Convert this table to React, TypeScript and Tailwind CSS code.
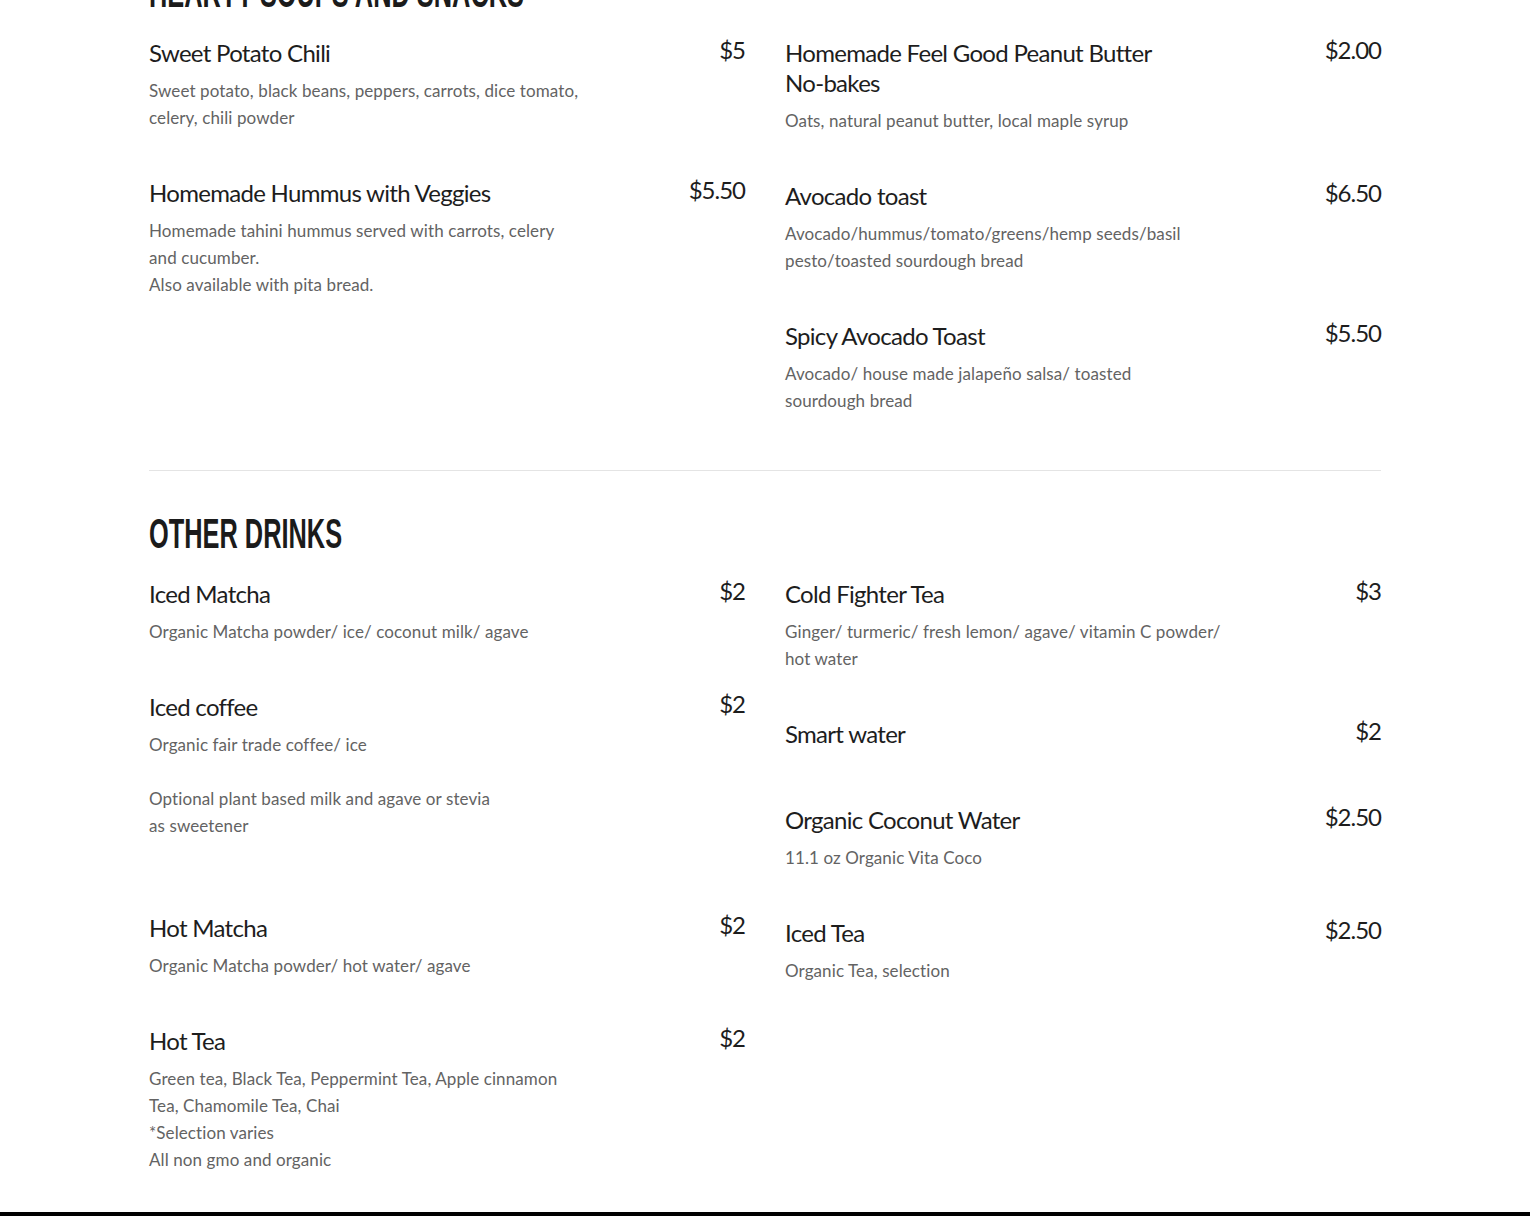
import { Fragment } from 'react'

interface MenuItem {
  name: string[]
  price: string
  desc?: string[]
  gap?: string
}

// blank string in desc = empty line
const SOUPS_LEFT: MenuItem[] = [
  {
    name: ['Sweet Potato Chili'],
    price: '$5',
    desc: ['Sweet potato, black beans, peppers, carrots, dice tomato,', 'celery, chili powder']
  },
  {
    name: ['Homemade Hummus with Veggies'],
    price: '$5.50',
    desc: [
      'Homemade tahini hummus served with carrots, celery',
      'and cucumber.',
      'Also available with pita bread.'
    ]
  }
]

const SOUPS_RIGHT: MenuItem[] = [
  {
    name: ['Homemade Feel Good Peanut Butter', 'No-bakes'],
    price: '$2.00',
    desc: ['Oats, natural peanut butter, local maple syrup']
  },
  {
    name: ['Avocado toast'],
    price: '$6.50',
    desc: ['Avocado/hummus/tomato/greens/hemp seeds/basil', 'pesto/toasted sourdough bread']
  },
  {
    name: ['Spicy Avocado Toast'],
    price: '$5.50',
    desc: ['Avocado/ house made jalapeño salsa/ toasted', 'sourdough bread']
  }
]

const DRINKS_LEFT: MenuItem[] = [
  {
    name: ['Iced Matcha'],
    price: '$2',
    desc: ['Organic Matcha powder/ ice/ coconut milk/ agave']
  },
  {
    name: ['Iced coffee'],
    price: '$2',
    desc: [
      'Organic fair trade coffee/ ice',
      '',
      'Optional plant based milk and agave or stevia',
      'as sweetener',
      ''
    ]
  },
  {
    name: ['Hot Matcha'],
    price: '$2',
    desc: ['Organic Matcha powder/ hot water/ agave']
  },
  {
    name: ['Hot Tea'],
    price: '$2',
    desc: [
      'Green tea, Black Tea, Peppermint Tea, Apple cinnamon',
      'Tea, Chamomile Tea, Chai',
      '*Selection varies',
      'All non gmo and organic'
    ]
  }
]

const DRINKS_RIGHT: MenuItem[] = [
  {
    name: ['Cold Fighter Tea'],
    price: '$3',
    desc: ['Ginger/ turmeric/ fresh lemon/ agave/ vitamin C powder/', 'hot water']
  },
  {
    name: ['Smart water'],
    price: '$2',
    gap: 'mb-[56px]'
  },
  {
    name: ['Organic Coconut Water'],
    price: '$2.50',
    desc: ['11.1 oz Organic Vita Coco']
  },
  {
    name: ['Iced Tea'],
    price: '$2.50',
    desc: ['Organic Tea, selection']
  }
]

function Item({ item, last }: { item: MenuItem; last: boolean }) {
  return (
    <div className={`flex justify-between ${last ? '' : item.gap ?? 'mb-[47px]'}`}>
      <div className="max-w-[480px]">
        <h3 className="text-[24px] leading-[30px] text-[#1d1d1d] tracking-[-0.7px]">
          {item.name.map((n, i) => (
            <Fragment key={i}>
              {i > 0 && <br />}
              {n}
            </Fragment>
          ))}
        </h3>
        {item.desc && (
          <div className="mt-[9px] text-[17px] leading-[27px] text-[#636363] tracking-[0.1px]">
            {item.desc.map((d, i) => (
              <p key={i} className="h-[27px] whitespace-nowrap">
                {d}
              </p>
            ))}
          </div>
        )}
      </div>
      <span className="-mt-[3px] text-[24px] leading-[30px] text-[#1d1d1d] tracking-[-1px]">
        {item.price}
      </span>
    </div>
  )
}

function Section({
  title,
  left,
  right,
  bottom
}: {
  title: string
  left: MenuItem[]
  right: MenuItem[]
  bottom: string
}) {
  return (
    <section className={`pt-[40px] ${bottom}`}>
      <h2
        className="mb-[24px] inline-block origin-left scale-x-[0.59] text-[43px] leading-[44px] font-bold text-[#1b1b1b] whitespace-nowrap"
        style={{ fontFamily: '"Liberation Sans Narrow", "Liberation Sans", sans-serif' }}
      >
        {title}
      </h2>
      <div className="grid grid-cols-2 gap-x-10">
        <div>
          {left.map((it, i) => (
            <Item key={i} item={it} last={i === left.length - 1} />
          ))}
        </div>
        <div>
          {right.map((it, i) => (
            <Item key={i} item={it} last={i === right.length - 1} />
          ))}
        </div>
      </div>
    </section>
  )
}

export default function App() {
  return (
    <div className="min-h-[1216px] bg-white font-['Lato',sans-serif] overflow-hidden">
      <div className="mx-auto -mt-[70px] w-[1232px]">
        <Section title="HEARTY SOUPS AND SNACKS" left={SOUPS_LEFT} right={SOUPS_RIGHT} bottom="pb-[56px]" />
        <div className="h-px bg-[#e4e4e4]" />
        <Section title="OTHER DRINKS" left={DRINKS_LEFT} right={DRINKS_RIGHT} bottom="pb-[39px]" />
      </div>
      <footer className="h-[120px] bg-black" />
    </div>
  )
}
